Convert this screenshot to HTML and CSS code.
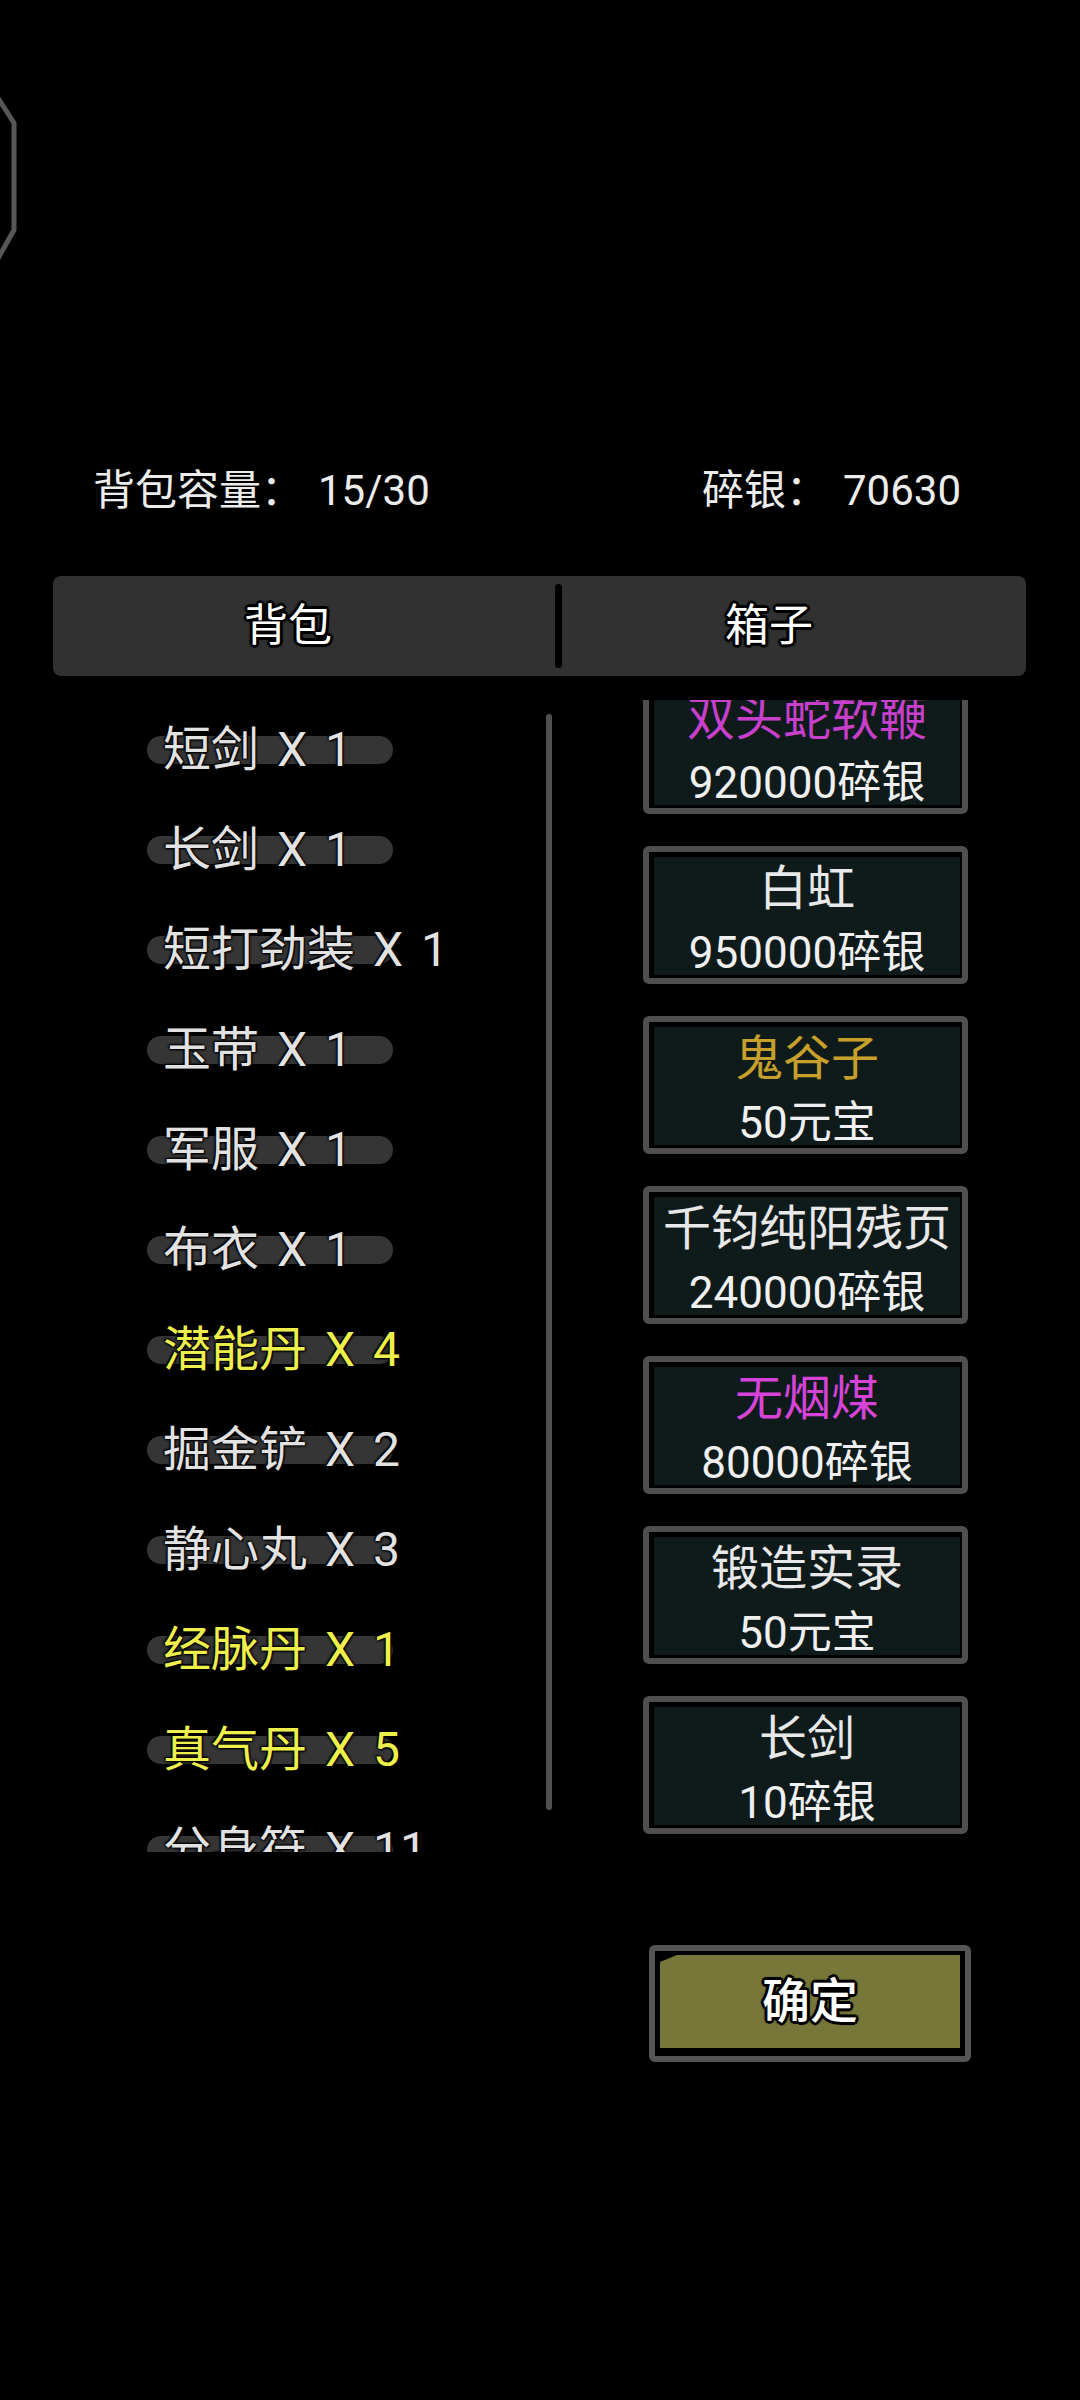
FILE: index.html
```html
<!DOCTYPE html>
<html lang="zh-CN">
<head>
<meta charset="utf-8">
<title>背包</title>
<link rel="stylesheet" href="styles.css">
</head>
<body>
<div class="screen">
  <svg class="octagon" width="24" height="210" viewBox="0 0 24 210">
    <polyline points="-4,33 14,61 14,168 -4,200" fill="none" stroke="#575757" stroke-width="5" stroke-linejoin="round"/>
  </svg>

  <div class="stats">
    <div class="stat stat-left"><span>背包容量：</span><span class="val">15/30</span></div>
    <div class="stat stat-right"><span>碎银：</span><span class="val">70630</span></div>
  </div>

  <div class="tabs">
    <div class="tab tab-left"><span class="outlined">背包</span></div>
    <div class="divider"></div>
    <div class="tab tab-right"><span class="outlined">箱子</span></div>
  </div>

  <div class="content">
    <div class="bag">
      <div class="item"><div class="pill"></div><div class="name">短剑 X 1</div></div>
      <div class="item"><div class="pill"></div><div class="name">长剑 X 1</div></div>
      <div class="item"><div class="pill"></div><div class="name">短打劲装 X 1</div></div>
      <div class="item"><div class="pill"></div><div class="name">玉带 X 1</div></div>
      <div class="item"><div class="pill"></div><div class="name">军服 X 1</div></div>
      <div class="item"><div class="pill"></div><div class="name">布衣 X 1</div></div>
      <div class="item"><div class="pill"></div><div class="name yellow">潜能丹 X 4</div></div>
      <div class="item"><div class="pill"></div><div class="name">掘金铲 X 2</div></div>
      <div class="item"><div class="pill"></div><div class="name">静心丸 X 3</div></div>
      <div class="item"><div class="pill"></div><div class="name yellow">经脉丹 X 1</div></div>
      <div class="item"><div class="pill"></div><div class="name yellow">真气丹 X 5</div></div>
      <div class="item"><div class="pill"></div><div class="name">分身符 X 11</div></div>
    </div>
    <div class="scrollbar"></div>
    <div class="box">
      <div class="cards">
        <div class="card"><div class="card-inner"><div class="cname magenta">双头蛇软鞭</div><div class="price">920000碎银</div></div></div>
        <div class="card"><div class="card-inner"><div class="cname">白虹</div><div class="price">950000碎银</div></div></div>
        <div class="card"><div class="card-inner"><div class="cname gold">鬼谷子</div><div class="price">50元宝</div></div></div>
        <div class="card"><div class="card-inner"><div class="cname">千钧纯阳残页</div><div class="price">240000碎银</div></div></div>
        <div class="card"><div class="card-inner"><div class="cname magenta2">无烟煤</div><div class="price">80000碎银</div></div></div>
        <div class="card"><div class="card-inner"><div class="cname">锻造实录</div><div class="price">50元宝</div></div></div>
        <div class="card"><div class="card-inner"><div class="cname">长剑</div><div class="price">10碎银</div></div></div>
      </div>
    </div>
  </div>

  <div class="footer">
    <div class="confirm"><div class="confirm-inner"><span class="outlined">确定</span></div></div>
  </div>
</div>
</body>
</html>
```

FILE: styles.css
```css
* { box-sizing: border-box; }
html, body {
  margin: 0;
  padding: 0;
  background: #000;
}
body {
  font-family: Roboto, "Noto Sans CJK SC", "Noto Sans", sans-serif;
  color: #eeeeee;
}
.screen {
  position: relative;
  width: 1080px;
  height: 2400px;
  overflow: hidden;
  padding-top: 470px;
}
.octagon {
  position: absolute;
  left: 0;
  top: 62px;
}

/* stats row */
.stats {
  display: flex;
  height: 42px;
  padding-left: 93px;
  font-size: 42px;
  line-height: 42px;
  color: #ececec;
}
.stat { display: flex; white-space: nowrap; }
.stat-left { width: 609px; }
.val { margin-left: 15px; }

/* tabs */
.tabs {
  display: flex;
  align-items: center;
  margin: 64px 0 0 53px;
  width: 973px;
  height: 100px;
  background: #313131;
  border-radius: 8px;
}
.tab {
  display: flex;
  justify-content: center;
  align-items: center;
  height: 100%;
  font-size: 44px;
  line-height: 50px;
  color: #fff;
}
.tab-left { width: 502px; padding-right: 32px; }
.tab-right { width: 464px; padding-right: 50px; }
.divider {
  width: 7px;
  height: 84px;
  background: #000;
  border-radius: 4px;
}
.outlined {
  color: #fff;
  text-shadow:
    -2px -2px 0 #000, 2px -2px 0 #000, -2px 2px 0 #000, 2px 2px 0 #000,
    -3px 0 0 #000, 3px 0 0 #000, 0 -3px 0 #000, 0 3px 0 #000,
    0 0 4px #000;
}

/* content */
.content {
  display: flex;
  margin-top: 24px;
  height: 1152px;
}
.bag {
  width: 546px;
  height: 1152px;
  overflow: hidden;
}
.item {
  display: grid;
  align-items: center;
  height: 100px;
  padding-left: 147px;
}
.pill {
  grid-area: 1 / 1;
  width: 246px;
  height: 28px;
  border-radius: 14px;
  background: #353535;
}
.name {
  grid-area: 1 / 1;
  margin-left: 16px;
  font-size: 48px;
  line-height: 60px;
  word-spacing: 6px;
  white-space: nowrap;
  color: #e2e2e2;
  text-shadow: 0 0 3px #000, 0 0 2px #000, 0 0 1px #000, 1px 1px 2px #000, -1px -1px 2px #000;
}
.name.yellow { color: #efef4c; }

.scrollbar {
  align-self: flex-start;
  margin-top: 14px;
  width: 6px;
  height: 1096px;
  border-radius: 3px;
  background: #505050;
}

.box {
  margin-left: 91px;
  width: 325px;
  height: 1152px;
  overflow: hidden;
}
.cards {
  display: flex;
  flex-direction: column;
  gap: 32px;
  margin-top: -24px;
}
.card {
  height: 138px;
  border: 6px solid #4f4f4f;
  border-radius: 6px;
  background: #000;
  padding: 5px 2px 3px 5px;
}
.card-inner {
  height: 100%;
  background: #0f1b1b;
  display: flex;
  flex-direction: column;
  align-items: center;
}
.cname {
  font-size: 48px;
  line-height: 64px;
  color: #e8e8e8;
  white-space: nowrap;
}
.cname.magenta { color: #c83fcc; }
.cname.magenta2 { color: #d743d8; }
.cname.gold { color: #c7a02c; }
.price {
  font-size: 44px;
  line-height: 64px;
  color: #f0f0f0;
  white-space: nowrap;
}

/* footer button */
.footer {
  margin-top: 93px;
  padding-left: 649px;
}
.confirm {
  width: 322px;
  height: 117px;
  border: 6px solid #555;
  border-radius: 6px;
  background: #000;
  padding: 4px 5px 8px 5px;
}
.confirm-inner {
  height: 100%;
  background: #77773a;
  clip-path: polygon(0 7px, 17px 0, 100% 0, 100% 100%, 0 100%);
  display: flex;
  justify-content: center;
  align-items: center;
  font-size: 48px;
  line-height: 52px;
  font-weight: 500;
}
```
